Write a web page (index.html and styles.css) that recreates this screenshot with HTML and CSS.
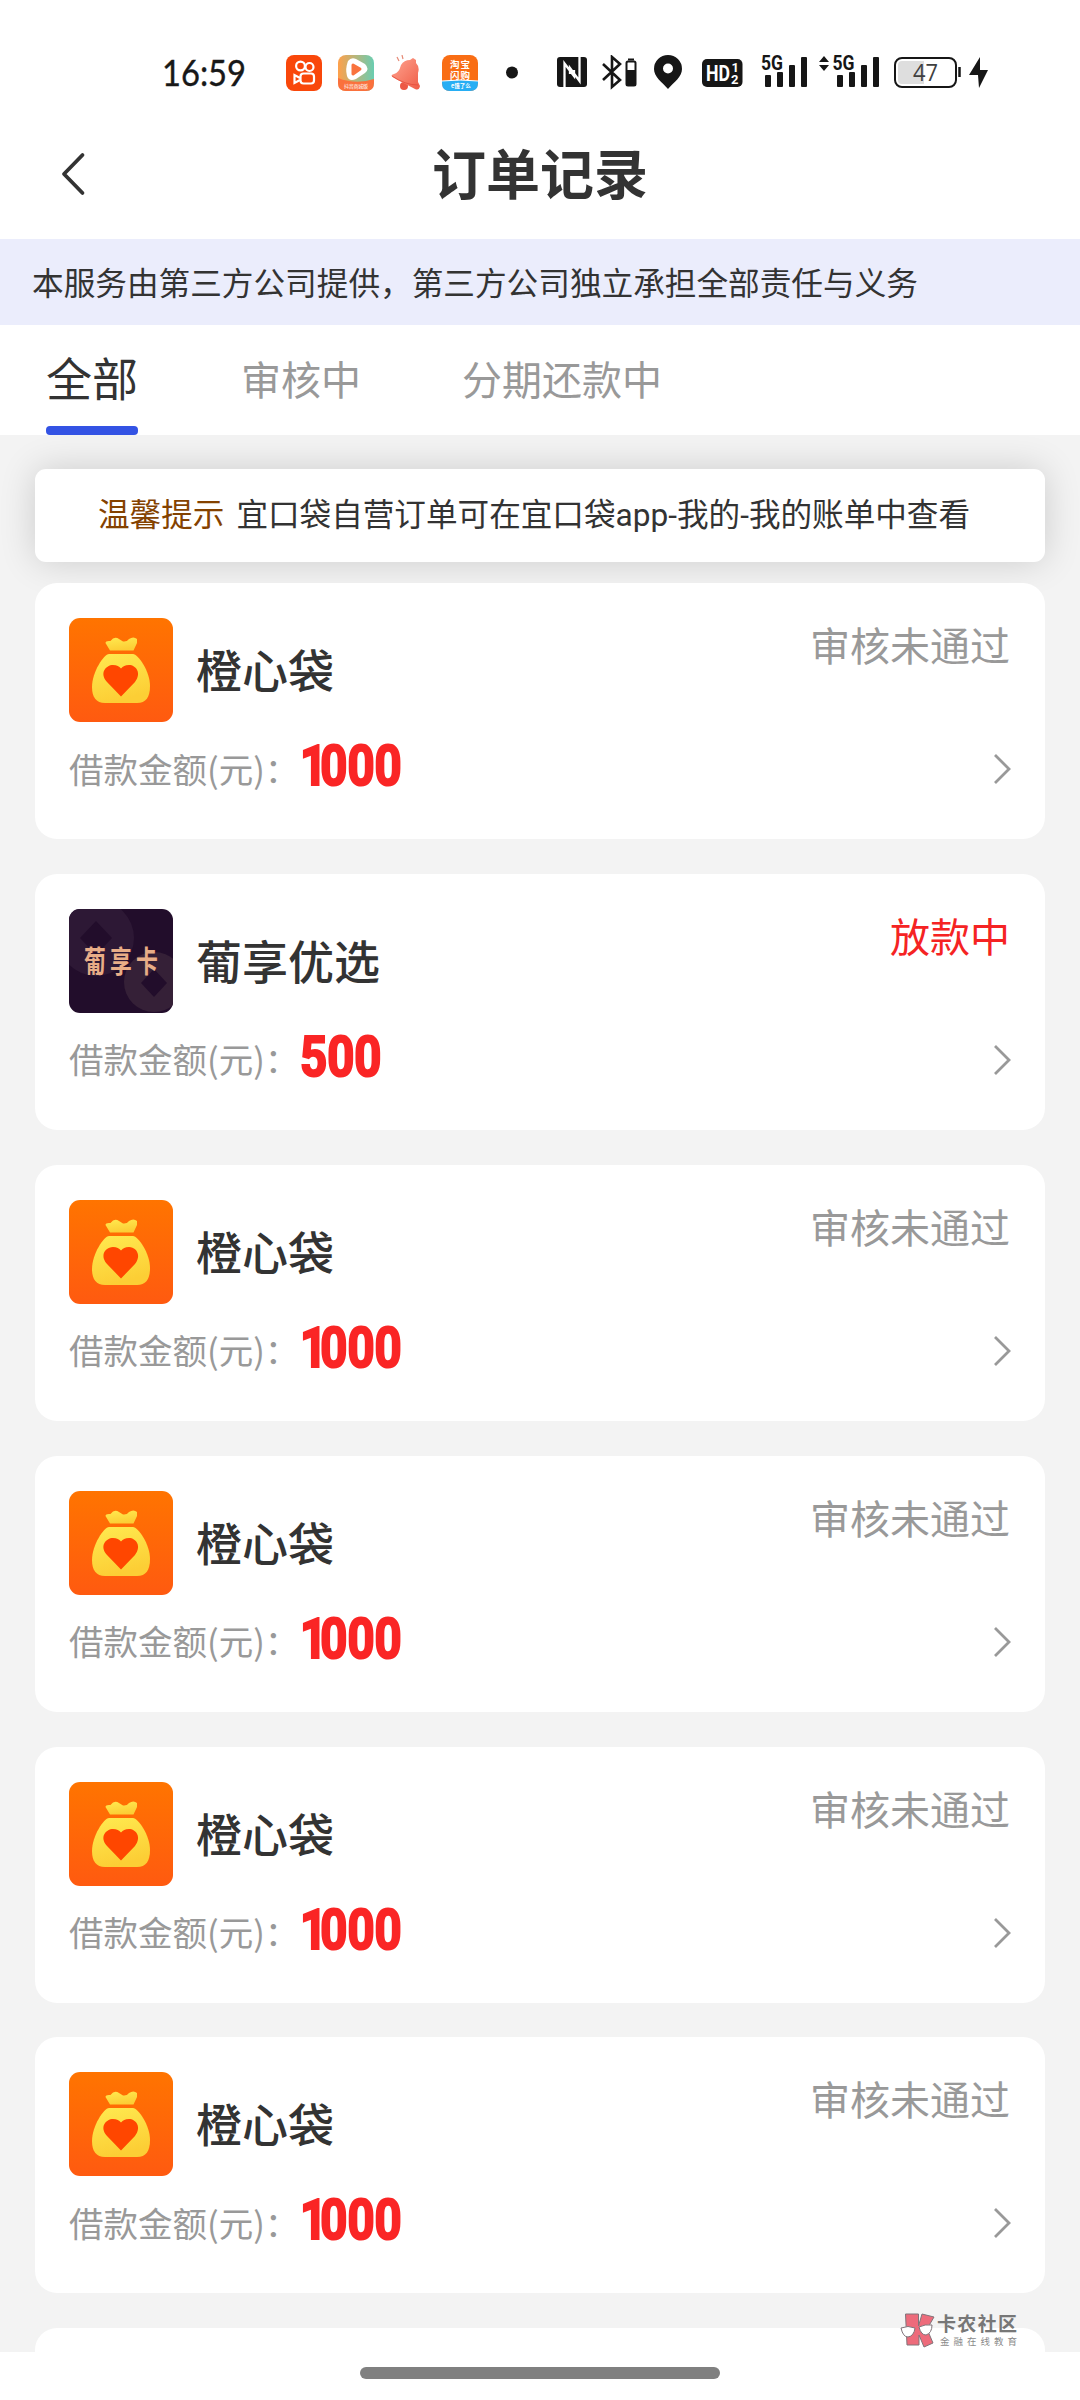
FILE: index.html
```html
<!DOCTYPE html>
<html lang="zh-CN">
<head>
<meta charset="utf-8">
<title>订单记录</title>
<link rel="stylesheet" href="styles.css">
</head>
<body>
<svg class="defs" width="0" height="0">
  <defs>
    <linearGradient id="orange" x1="0" y1="0" x2="0" y2="1"><stop offset="0" stop-color="#ff7400"/><stop offset="1" stop-color="#ff5a10"/></linearGradient>
    <linearGradient id="gold" x1="0" y1="0" x2="0.3" y2="1"><stop offset="0" stop-color="#ffea50"/><stop offset="1" stop-color="#fcce35"/></linearGradient>
    <symbol id="bag" viewBox="0 0 104 104">
      <rect width="104" height="104" rx="11" fill="url(#orange)"/>
      <path d="M41 32.500 36.500 25q0-2.500 5-2 4-5.500 8.500-2l4 2.500q4 .5 6-2.500 4.500-3 8 0v4l-3.500 7.500Z" fill="url(#gold)"/>
      <path d="M40 36h24c5 0 17 17 17 32 0 11-4 17-13 17H36C27 85 23 79 23 69c0-15 12-33 17-33Z" fill="url(#gold)"/>
      <path d="M52 78.500 38 64C30 55 37 47 44 47c4 0 6 1.500 8 3.500 2-2 4-3.500 8-3.500 7 0 13 8 6 17Z" fill="#ff4600"/>
    </symbol>
    <symbol id="next" viewBox="0 0 20 32"><path d="m2 2 14 14L2 30" fill="none" stroke="#999" stroke-width="2.800"/></symbol>
  </defs>
</svg>

<header class="status-bar">
  <svg class="clock" width="92" height="40" viewBox="0 0 92 40"><text x="4" y="31" font-family="Lato, sans-serif" font-size="36.500" textLength="84" lengthAdjust="spacingAndGlyphs" fill="#181818" stroke="#181818" stroke-width=".4">16:59</text></svg>
  <svg class="app-video" width="36" height="36" viewBox="0 0 36 36">
    <rect width="36" height="36" rx="8" fill="#f9470a"/>
    <g fill="none" stroke="#fff" stroke-width="2.200"><circle cx="14.500" cy="11" r="4.400"/><circle cx="23.500" cy="12" r="4"/><rect x="14.500" y="18.500" width="13.500" height="10" rx="3"/><path d="M14 23 8.500 20v8l5.500-3"/></g>
  </svg>
  <svg class="app-play" width="36" height="36" viewBox="0 0 36 36">
    <defs><linearGradient id="mint"><stop stop-color="#ffa04a"/><stop offset="1" stop-color="#69cdb1"/></linearGradient></defs>
    <rect width="36" height="36" rx="8" fill="url(#mint)"/>
    <path d="M0 23q18 7 36 1v4q0 8-8 8H8q-8 0-8-8Z" fill="#fa713d"/>
    <path d="M10 6q3-4 8-2l9 5q5 5 0 9l-9 6q-7 3-9-3Q7 14 10 6Z" fill="#fff"/><path d="m15 10 7 4-7 5Z" fill="#f9733e" stroke="#f9733e" stroke-width="3" stroke-linejoin="round"/>
    <text x="6" y="33" font-family="Noto Sans CJK SC, sans-serif" font-size="5" textLength="24" fill="#fff">抖音商城版</text>
  </svg>
  <svg class="app-bell" width="32" height="36" viewBox="0 0 32 36">
    <defs><linearGradient id="coral" x1="0" y1="0" x2="1" y2="1"><stop stop-color="#ffa591"/><stop offset="1" stop-color="#ef5c46"/></linearGradient></defs>
    <path d="M9 6 7 2m6 2-1-4" stroke="#e68a76" stroke-width="1.200"/>
    <circle cx="14" cy="31" r="4" fill="#ec5844"/>
    <path d="M11 10q3-5 9-5l3-2 3 2v3q4 4 2 10v9l2 4q-1 5-5 3L4 23q-5-3 0-4 5-1 7-9Z" fill="url(#coral)"/>
    <path d="M2 21q13 9 26 9" fill="none" stroke="#e44d3b" stroke-width=".8"/>
  </svg>
  <svg class="app-shop" width="36" height="36" viewBox="0 0 36 36">
    <rect width="36" height="36" rx="8" fill="#f96d14"/><path d="M0 26q18-2 36 0v2q0 8-8 8H8q-8 0-8-8Z" fill="#27aef4"/><path d="M0 26q18-2 36 0" fill="none" stroke="#fff" stroke-width="1"/>
    <g font-family="Noto Sans CJK SC, sans-serif" font-weight="700" fill="#fff"><text x="8" y="13" font-size="9.500" textLength="20">淘宝</text><text x="8" y="23.500" font-size="9.500" textLength="20">闪购</text><text x="9" y="33" font-size="5.500">e饿了么</text></g>
  </svg>
  <svg class="dot" width="12" height="36" viewBox="0 0 12 36"><circle cx="6" cy="17.500" r="6" fill="#161616"/></svg>
  <svg class="nfc" width="30" height="36" viewBox="0 0 30 36"><rect y="2" width="30" height="30" rx="3" fill="#161616"/><path d="M7.500 32V8.500L17 21v-6M22.500 2v24L13 13v6" fill="none" stroke="#fff" stroke-width="2.300"/></svg>
  <svg class="bluetooth" width="35" height="36" viewBox="0 0 35 36"><path d="m1 9 17 16-8 7V2l8 7L1 25" fill="none" stroke="#161616" stroke-width="2.600"/><rect x="24.500" y="6.500" width="9" height="24" rx="1.500" fill="#fff" stroke="#161616" stroke-width="2"/><path d="M26 3.500h6v2h-6zM24 15h10v16H24z" fill="#161616"/></svg>
  <svg class="location" width="28" height="36" viewBox="0 0 28 36"><path fill-rule="evenodd" d="M14 34C8 27 0 22 0 14a14 14 0 0 1 28 0c0 8-8 13-14 20Zm0-15.500a5 5 0 1 0 0-10 5 5 0 0 0 0 10Z" fill="#161616"/></svg>
  <svg class="hd" width="41" height="36" viewBox="0 0 41 36"><rect y="4" width="40.500" height="28" rx="5" fill="#161616"/><g font-family="Roboto, sans-serif" font-weight="700" fill="#fff"><text x="4" y="26" font-size="22" textLength="24" lengthAdjust="spacingAndGlyphs">HD</text><text x="29.500" y="17" font-size="13">1</text><text x="29" y="28.500" font-size="13">2</text></g></svg>
  <svg class="signal" width="48" height="46" viewBox="-2 -6 48 46"><text x="0" y="15" font-family="Roboto, sans-serif" font-weight="700" font-size="20" textLength="22" lengthAdjust="spacingAndGlyphs" fill="#161616">5G</text><g fill="#161616"><rect x="4" y="20" width="6" height="12" rx="1"/><rect x="16" y="17" width="6" height="15" rx="1"/><rect x="28" y="10" width="6" height="22" rx="1"/><rect x="40" y="2" width="6" height="30" rx="1"/></g></svg>
  <svg class="signal-data" width="60" height="46" viewBox="0 -6 60 46"><path d="m0 7 5-6 5 6ZM0 10h10l-5 6Z" fill="#161616"/><text x="13.500" y="15" font-family="Roboto, sans-serif" font-weight="700" font-size="20" textLength="22" lengthAdjust="spacingAndGlyphs" fill="#161616">5G</text><g fill="#161616"><rect x="18" y="20" width="6" height="12" rx="1"/><rect x="30" y="17" width="6" height="15" rx="1"/><rect x="42" y="10" width="6" height="22" rx="1"/><rect x="54" y="2" width="6" height="30" rx="1"/></g></svg>
  <svg class="battery" width="67" height="36" viewBox="0 0 67 36"><rect x="1" y="3" width="61" height="29" rx="7" fill="#fff" stroke="#161616" stroke-width="2"/><path d="M30 6H8q-4 0-4 4v15q0 4 4 4h22Z" fill="#dedede"/><path d="M65.500 12v10" stroke="#161616" stroke-width="2.500"/><text x="19" y="26" font-family="Open Sans, sans-serif" font-size="23" textLength="25" lengthAdjust="spacingAndGlyphs" fill="#404040">47</text></svg>
  <svg class="bolt" width="20" height="36" viewBox="0 0 20 36"><path d="M11 2 0 20h9l1 13 9-18h-8Z" fill="#161616"/></svg>
</header>

<nav class="title-bar">
  <svg class="back" width="28" height="44" viewBox="0 0 28 44"><path d="M22.500 3 4 22l18.500 19" fill="none" stroke="#333" stroke-width="3.800" stroke-linecap="round" stroke-linejoin="round"/></svg>
  <h1 class="title">订单记录</h1>
</nav>
<p class="provider">本服务由第三方公司提供，第三方公司独立承担全部责任与义务</p>
<div class="tabs">
  <span class="tab tab-active">全部</span>
  <span class="tab">审核中</span>
  <span class="tab">分期还款中</span>
</div>

<main class="content">
  <div class="notice"><span class="notice-tag">温馨提示</span><span>宜口袋自营订单可在宜口袋<span class="latin">app-</span>我的<span class="latin">-</span>我的账单中查看</span></div>
  <div class="orders">
    <article class="order">
      <div class="order-head"><svg class="logo"><use href="#bag"/></svg><h2 class="name">橙心袋</h2><span class="state">审核未通过</span></div>
      <div class="order-foot"><span class="label">借款金额(元)：</span><b class="amount"><span class="one">1</span>000</b><svg class="next"><use href="#next"/></svg></div>
    </article>
    <article class="order">
      <div class="order-head">
        <svg class="logo" viewBox="0 0 104 104">
          <defs><clipPath id="tile"><rect width="104" height="104" rx="11"/></clipPath></defs>
          <g clip-path="url(#tile)"><rect width="104" height="104" fill="#220d2b"/><circle cx="27" cy="29" r="38" fill="#2d1835"/><path d="m27 12 16 17-16 17-16-17Z" fill="#220d2b"/><circle cx="85" cy="73" r="30" fill="#352037"/><path d="m85 60 13 14-13 14-13-14Z" fill="#220d2b"/></g>
          <g font-family="Noto Sans CJK SC, sans-serif" font-weight="700" font-size="23" fill="#e8ad87"><text transform="translate(15 63) scale(.95 1.300)">葡</text><text transform="translate(41 63) scale(.95 1.300)">享</text><text transform="translate(67 63) scale(.95 1.300)">卡</text></g>
        </svg>
        <h2 class="name">葡享优选</h2><span class="state state-paying">放款中</span>
      </div>
      <div class="order-foot"><span class="label">借款金额(元)：</span><b class="amount">500</b><svg class="next"><use href="#next"/></svg></div>
    </article>
    <article class="order">
      <div class="order-head"><svg class="logo"><use href="#bag"/></svg><h2 class="name">橙心袋</h2><span class="state">审核未通过</span></div>
      <div class="order-foot"><span class="label">借款金额(元)：</span><b class="amount"><span class="one">1</span>000</b><svg class="next"><use href="#next"/></svg></div>
    </article>
    <article class="order">
      <div class="order-head"><svg class="logo"><use href="#bag"/></svg><h2 class="name">橙心袋</h2><span class="state">审核未通过</span></div>
      <div class="order-foot"><span class="label">借款金额(元)：</span><b class="amount"><span class="one">1</span>000</b><svg class="next"><use href="#next"/></svg></div>
    </article>
    <article class="order">
      <div class="order-head"><svg class="logo"><use href="#bag"/></svg><h2 class="name">橙心袋</h2><span class="state">审核未通过</span></div>
      <div class="order-foot"><span class="label">借款金额(元)：</span><b class="amount"><span class="one">1</span>000</b><svg class="next"><use href="#next"/></svg></div>
    </article>
    <article class="order">
      <div class="order-head"><svg class="logo"><use href="#bag"/></svg><h2 class="name">橙心袋</h2><span class="state">审核未通过</span></div>
      <div class="order-foot"><span class="label">借款金额(元)：</span><b class="amount"><span class="one">1</span>000</b><svg class="next"><use href="#next"/></svg></div>
    </article>
    <article class="order"></article>
  </div>
</main>
<footer class="gesture"><span class="handle"></span></footer>

<svg class="watermark" width="122" height="40" viewBox="0 0 122 40">
  <g stroke="#80747a" stroke-width="1"><path d="M5.500 4h13v12L22 4l12 3-7 12 6 14-9 4-5-12v10H7Z" fill="#ed6b7b"/><path d="M1 18q7-3 14 0-1 8-7 9-5 0-7-9ZM19 17q6-3 13-2 0 8-6 10-5 0-7-8Z" fill="#fff"/></g>
  <g font-family="Noto Sans CJK SC, sans-serif" fill="#8a8a8a"><text x="37" y="21" font-size="19" font-weight="700" textLength="80" fill="#777">卡农社区</text><text x="40" y="34.500" font-size="9.500" textLength="77">金融在线教育</text></g>
</svg>
</body>
</html>
```
FILE: styles.css
```css
* { box-sizing: border-box; }
body {
  margin: 0;
  width: 1080px;
  height: 2400px;
  overflow: hidden;
  position: relative;
  display: flex;
  flex-direction: column;
  background: #fff;
  color: #333;
  font-family: "Noto Sans CJK SC", sans-serif;
}
h1, h2, p { margin: 0; }
svg { display: block; flex: none; }
.defs { position: absolute; }

.status-bar {
  height: 120px;
  flex: none;
  display: flex;
  align-items: flex-start;
  padding: 55px 0 0 158px;
}
.app-video { margin-left: 36px; }
.app-play { margin-left: 16px; }
.app-bell { margin-left: 16px; }
.app-shop { margin-left: 20px; }
.dot { margin-left: 28px; }
.nfc { margin-left: 39px; }
.bluetooth { margin-left: 15px; }
.location { margin-left: 17px; }
.hd { margin-left: 20px; }
.signal { margin: -6px 0 0 16px; }
.signal-data { margin: -6px 0 0 12px; }
.battery { margin-left: 15px; }
.bolt { margin-left: 8px; }

.title-bar {
  height: 119px;
  flex: none;
  display: grid;
  grid-template-columns: 1fr auto 1fr;
  align-items: start;
  padding: 0 60px;
}
.back { margin-top: 32px; }
.title {
  margin-top: 22px;
  font-size: 54px;
  line-height: 60px;
  font-weight: 700;
}

.provider {
  height: 86px;
  flex: none;
  padding-left: 32px;
  background: #ebedfc;
  font-size: 31.650px;
  line-height: 84px;
  white-space: nowrap;
}

.tabs {
  height: 110px;
  flex: none;
  display: flex;
  padding-left: 46px;
  gap: 103px;
}
.tab {
  font-size: 40px;
  line-height: 106px;
  color: #999;
}
.tab + .tab + .tab { margin-left: -2px; }
.tab-active {
  display: flex;
  flex-direction: column;
  height: 110px;
  font-size: 46px;
  line-height: 102px;
  color: #333;
}
.tab-active::after {
  content: "";
  height: 9px;
  margin-top: -1px;
  border-radius: 4px;
  background: #3353e4;
}

.content {
  height: 1917px;
  flex: none;
  overflow: hidden;
  padding: 34px 35px 0;
  background: #f3f3f3;
}
.notice {
  height: 93px;
  display: flex;
  gap: 12px;
  padding-left: 63px;
  border-radius: 11px;
  background: #fff;
  box-shadow: 0 0 36px rgba(0, 0, 0, .16);
  font-size: 31.600px;
  line-height: 87px;
  white-space: nowrap;
}
.notice-tag { color: #844200; }
.latin { font-family: Roboto, sans-serif; line-height: 1; }

.orders {
  position: relative;
  display: flex;
  flex-direction: column;
  gap: 34.900px;
  margin-top: 21px;
}
.order {
  height: 256px;
  flex: none;
  padding: 35px 34px 0;
  border-radius: 22px;
  background: #fff;
}
.order-head { display: flex; height: 103px; }
.logo { width: 104px; height: 104px; }
.name {
  margin-left: 23px;
  font-size: 46px;
  line-height: 100px;
  font-weight: 500;
}
.state {
  margin-left: auto;
  margin-right: 1px;
  font-size: 40px;
  line-height: 52px;
  color: #999;
}
.state-paying { color: #f52323; }
.order-foot {
  display: flex;
  align-items: center;
  height: 60px;
  margin-top: 18px;
}
.label {
  width: 231px;
  padding-bottom: 3px;
  font-size: 34.500px;
  color: #999;
  white-space: nowrap;
}
.amount {
  margin-bottom: 6px;
  font-family: Roboto, sans-serif;
  font-size: 55px;
  line-height: 60px;
  color: #fa2525;
  transform: scaleX(.86);
  transform-origin: left;
  -webkit-text-stroke: 2.200px #fa2525;
}
.one { letter-spacing: -8px; }
.next { width: 20px; height: 32px; margin-left: auto; margin-right: -2px; }

.gesture {
  height: 48px;
  flex: none;
  display: flex;
  justify-content: center;
  padding-top: 15px;
}
.handle { width: 360px; height: 12px; border-radius: 6px; background: #808080; }

.watermark { position: absolute; left: 900px; top: 2310px; }
```
